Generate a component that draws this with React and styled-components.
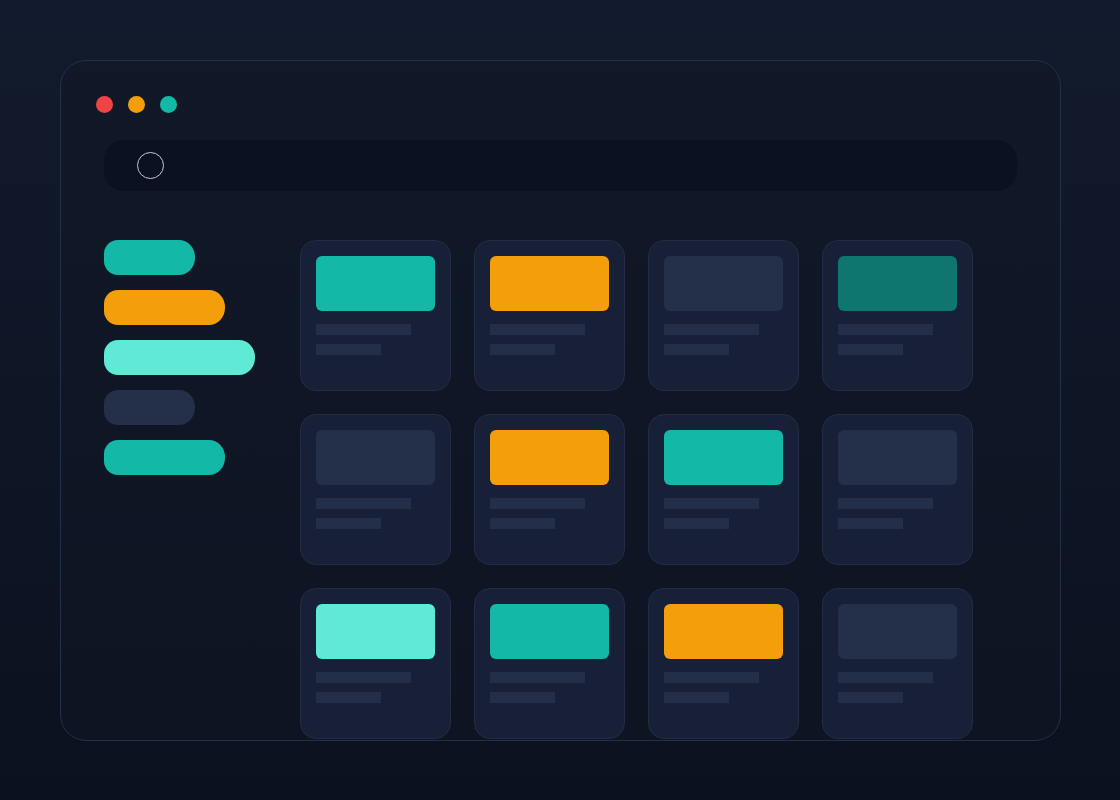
import React from "react";
import styled, { createGlobalStyle } from "styled-components";

const Global = createGlobalStyle`
  html, body { margin: 0; padding: 0; }
  body {
    width: 1120px;
    height: 800px;
    overflow: hidden;
    font-family: "Inter", "Liberation Sans", sans-serif;
    background: linear-gradient(180deg, #121a2d 0%, #0b111e 100%);
  }
`;

const Page = styled.div`
  width: 1120px;
  height: 800px;
  box-sizing: border-box;
  padding: 60px 0 0 60px;
`;

const Window = styled.div`
  box-sizing: border-box;
  width: 1001px;
  height: 681px;
  border: 1px solid #223049;
  border-radius: 26px;
  background: linear-gradient(180deg, #111827 0%, #0e1422 100%);
  overflow: hidden;
  display: flex;
  flex-direction: column;
`;

const TitleBar = styled.div`
  display: flex;
  gap: 15px;
  padding: 35px 0 0 35px;
`;

const Dot = styled.span`
  width: 17px;
  height: 17px;
  border-radius: 50%;
  background: ${(p) => p.$color};
`;

const SearchBar = styled.div`
  margin: 27px 43px 0 43px;
  height: 51px;
  border-radius: 20px;
  background: #0b1120;
  display: flex;
  align-items: center;
  padding-left: 33px;
`;

const SearchCircle = styled.span`
  box-sizing: border-box;
  width: 27px;
  height: 27px;
  border-radius: 50%;
  border: 1px solid #c3cad6;
`;

const Body = styled.div`
  display: flex;
  padding: 49px 0 0 43px;
`;

const Sidebar = styled.div`
  width: 196px;
  display: flex;
  flex-direction: column;
  gap: 15px;
`;

const Pill = styled.div`
  width: ${(p) => p.$w}px;
  height: 35px;
  border-radius: 14px 16px 16px 14px / 14px 17px 17px 14px;
  background: ${(p) => p.$color};
`;

const Grid = styled.div`
  display: grid;
  grid-template-columns: repeat(4, 151px);
  grid-auto-rows: 151px;
  gap: 23px;
`;

const Card = styled.div`
  box-sizing: border-box;
  border: 1px solid #222d45;
  border-radius: 16px;
  background: #172036;
  padding: 15px;
  display: flex;
  flex-direction: column;
`;

const Thumb = styled.div`
  height: 55px;
  width: 119px;
  border-radius: 6px;
  background: ${(p) => p.$color};
`;

const Line = styled.div`
  height: 11px;
  width: ${(p) => p.$w}px;
  background: #232f48;
  margin-top: ${(p) => p.$mt}px;
`;

const TEAL = "#14b8a6";
const ORANGE = "#f59e0b";
const LIGHT = "#5eead4";
const SLATE = "#243049";
const DARK = "#0f766e";

const pills = [
  { w: 91, c: TEAL },
  { w: 121, c: ORANGE },
  { w: 151, c: LIGHT },
  { w: 91, c: SLATE },
  { w: 121, c: TEAL },
];

const cards = [
  TEAL, ORANGE, SLATE, DARK,
  SLATE, ORANGE, TEAL, SLATE,
  LIGHT, TEAL, ORANGE, SLATE,
];

export default function App() {
  return (
    <>
      <Global />
      <Page>
        <Window>
          <TitleBar>
            <Dot $color="#ef4444" />
            <Dot $color="#f59e0b" />
            <Dot $color="#14b8a6" />
          </TitleBar>
          <SearchBar>
            <SearchCircle />
          </SearchBar>
          <Body>
            <Sidebar>
              {pills.map((p, i) => (
                <Pill key={i} $w={p.w} $color={p.c} />
              ))}
            </Sidebar>
            <Grid>
              {cards.map((c, i) => (
                <Card key={i}>
                  <Thumb $color={c} />
                  <Line $w={95} $mt={13} />
                  <Line $w={65} $mt={9} />
                </Card>
              ))}
            </Grid>
          </Body>
        </Window>
      </Page>
    </>
  );
}
